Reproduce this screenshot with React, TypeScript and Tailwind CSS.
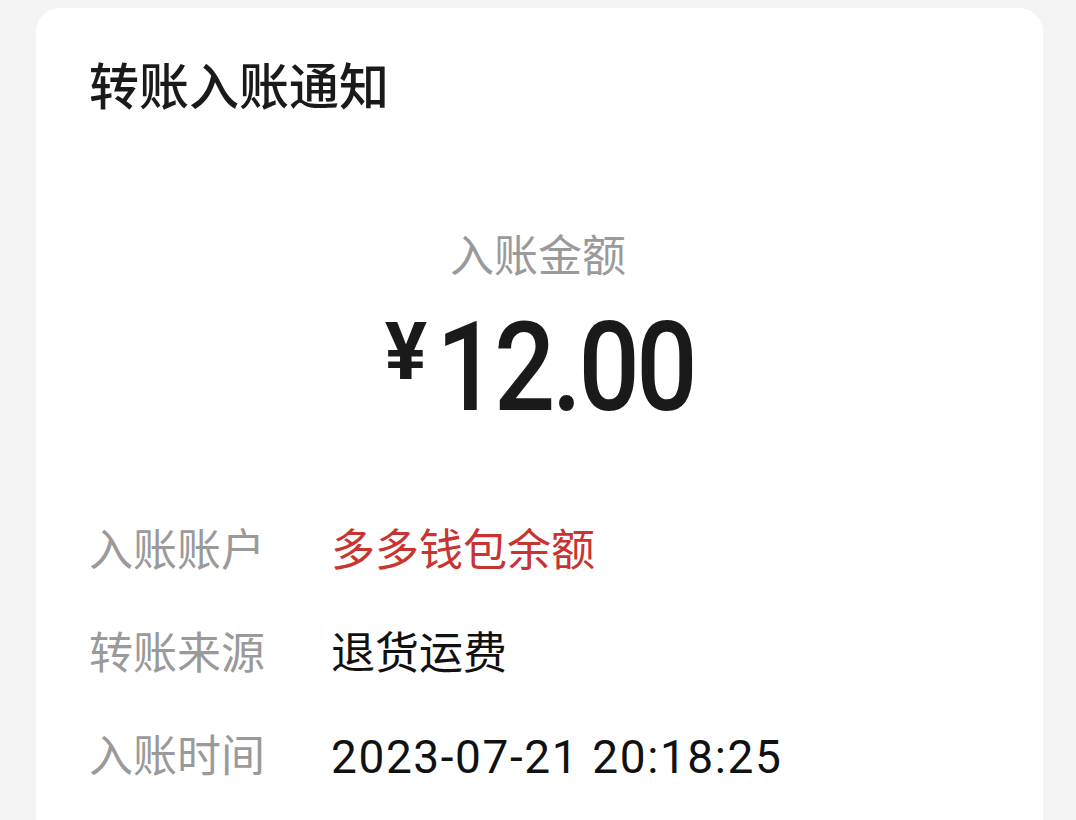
const rows = [
  { label: "入账账户", value: "多多钱包余额", tone: "text-[#c8342f]", latin: false },
  { label: "转账来源", value: "退货运费", tone: "text-[#111111]", latin: false },
  { label: "入账时间", value: "2023-07-21 20:18:25", tone: "text-[#111111]", latin: true },
];

export default function App() {
  return (
    <div className="min-h-screen bg-[#f4f4f4] pr-[33px] pl-[36px] pt-[8px] font-['Roboto','Noto_Sans_CJK_SC',sans-serif]">
      <div className="flex min-h-[900px] flex-col rounded-[24px] bg-white pr-[56px] pl-[53px] pt-[55px]">
        <h1 className="text-[50px] leading-[50px] font-medium text-[#1a1a1a]">
          转账入账通知
        </h1>

        <div className="mt-[122px] text-center text-[44px] leading-[44px] text-[#9a9a9a]">
          入账金额
        </div>

        <div className="mt-[27px] flex items-start justify-center pl-[22px] text-[#1a1a1a]">
          <span className="mt-[7px] -mr-[10px] text-[79px] leading-none font-bold">¥</span>
          <span className="inline-block origin-center scale-x-[0.87] text-[124px] leading-none font-medium tracking-[-4px]">
            12.00
          </span>
        </div>

        <div className="mt-[99px] flex flex-col gap-[59px]">
          {rows.map((row) => (
            <div key={row.label} className="flex items-center">
              <span className="w-[242px] shrink-0 text-[44px] leading-[44px] text-[#9a9a9a]">
                {row.label}
              </span>
              {row.latin ? (
                <span className={`text-[46px] leading-[44px] tracking-[1.6px] ${row.tone}`}>
                  {row.value}
                </span>
              ) : (
                <span className={`text-[44px] leading-[44px] ${row.tone}`}>{row.value}</span>
              )}
            </div>
          ))}
        </div>
      </div>
    </div>
  );
}
